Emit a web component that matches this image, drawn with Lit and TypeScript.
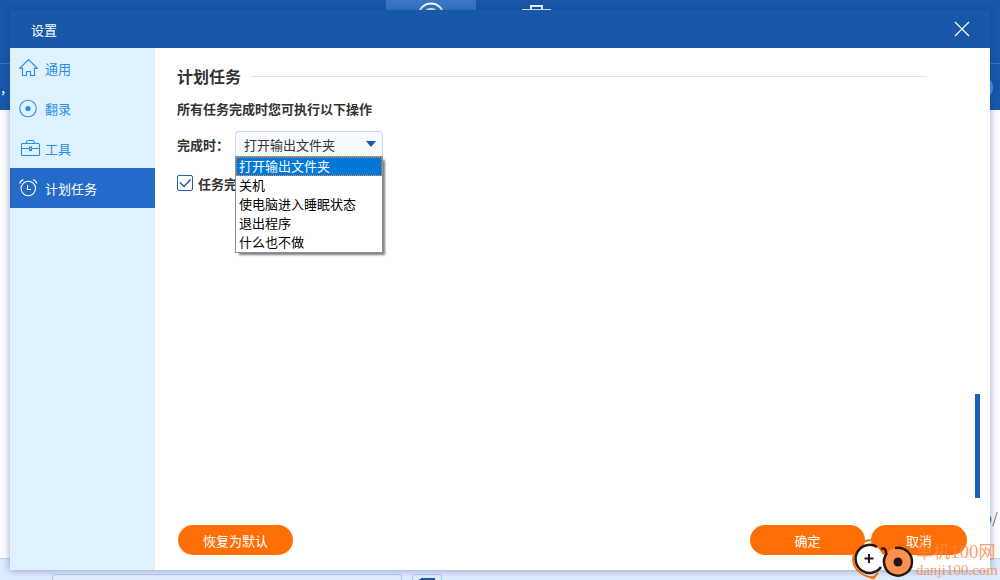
import { LitElement, html, css, svg } from "lit";
import { customElement, property, state } from "lit/decorators.js";
import { classMap } from "lit/directives/class-map.js";

const icons = {
  home: svg`<path d="M.5 10.5 9.5 1.5 18.5 10.5"/><path d="M3.5 9.5V17.5H7.5V13.5H11.5V17.5H15.5V9.5"/><path d="M.5 10.5H3.5M15.5 10.5H18.5"/>`,
  disc: svg`<circle cx="9" cy="10.5" r="8.3"/><circle cx="9" cy="10.5" r="2.6" fill="currentColor" stroke="none"/>`,
  tools: svg`<rect x="2.5" y="5.5" width="18" height="12" rx="1"/><path d="M7.5 5.5V4.5Q7.5 2.5 9 2.500H14Q15.5 2.5 15.5 4.5V5.5M2.5 10.5H10M13 10.5H20.5"/><rect x="10.5" y="9" width="2" height="3.5"/>`,
  clock: svg`<circle cx="9.3" cy="10.5" r="7.2"/><path d="M8.5 7V11.5H12M.7 5.500Q1.5 2.5 4.5 1.8M14 1.8Q17 2.5 17.800 5.5"/>`,
};

type IconName = keyof typeof icons;

const sections: { label: string; icon: IconName }[] = [
  { label: "通用", icon: "home" },
  { label: "翻录", icon: "disc" },
  { label: "工具", icon: "tools" },
  { label: "计划任务", icon: "clock" },
];

const actions = ["打开输出文件夹", "关机", "使电脑进入睡眠状态", "退出程序", "什么也不做"];

@customElement("main-window")
export class MainWindow extends LitElement {
  static styles = css`
    :host {
      display: flex;
      flex-direction: column;
      height: 100%;
      overflow: hidden;
      background: #fff;
    }
    .tabs {
      height: 63px;
      display: flex;
      justify-content: center;
      gap: 15px;
      padding-right: 33px;
      background: #1858a8;
    }
    .tab {
      display: flex;
      align-items: flex-start;
      width: 90px;
      height: 63px;
      padding: 0;
      border: 0;
      background: none;
      color: #fff;
    }
    .tab.active {
      background: #3a77c3;
    }
    .tab svg {
      width: 90px;
      height: 20px;
      fill: none;
      stroke: currentColor;
      stroke-width: 2;
    }
    .bar {
      display: flex;
      justify-content: space-between;
      align-items: center;
      box-sizing: border-box;
      height: 47px;
      border-top: 1px solid #3b73bb;
      background: #1858a8;
      color: #fff;
      font-size: 13px;
    }
    .knob {
      width: 23px;
      height: 23px;
      margin-right: 7px;
      border: 0;
      border-radius: 12px;
      background: #3d9cf0;
    }
    .area {
      flex: 1;
      display: flex;
      flex-direction: column;
      justify-content: flex-end;
      align-items: flex-end;
      padding: 0 2px 30px;
      color: #777;
      font-size: 15px;
      line-height: 20px;
    }
    .bottom {
      box-sizing: border-box;
      height: 22px;
      display: flex;
      gap: 10px;
      padding: 15px 0 0 52px;
      border-top: 1px solid #bdd0f2;
      background: #dfebfe;
      overflow: hidden;
    }
    .path,
    .browse {
      box-sizing: border-box;
      flex: none;
      height: 24px;
      padding: 0;
      border: 1px solid #b4c9ee;
      border-radius: 3px;
      background: #e3edff;
      color: #1858a8;
    }
    .path {
      width: 350px;
    }
    .browse {
      display: flex;
      justify-content: center;
      align-items: flex-start;
      width: 30px;
    }
    .browse svg {
      margin-top: 2px;
      fill: none;
      stroke: currentColor;
      stroke-width: 2;
    }
  `;

  render() {
    return html`
      <nav class="tabs">
        <button class="tab active" aria-label="翻录">
          <svg viewBox="0 0 90 20"><circle cx="45" cy="16" r="12.5" /><circle cx="45" cy="16" r="7" /></svg>
        </button>
        <button class="tab" aria-label="工具">
          <svg viewBox="0 0 90 20"><path d="M40 10V6H51V10M32 10H59V19H32Z" /></svg>
        </button>
      </nav>
      <div class="bar"><span>，</span><button class="knob" aria-label="播放"></button></div>
      <div class="area"><span>o/</span></div>
      <div class="bottom">
        <input class="path" aria-label="输出路径" />
        <button class="browse" aria-label="浏览">
          <svg width="16" height="14"><path d="M1 13V3H3V2H15V13M12 2V6" /></svg>
        </button>
      </div>
    `;
  }
}

@customElement("action-picker")
export class ActionPicker extends LitElement {
  @property({ type: Number }) index = 0;
  @state() private open = true;

  static styles = css`
    :host {
      display: flex;
      align-items: center;
      font-size: 13px;
    }
    label {
      width: 58px;
      font-weight: bold;
    }
    .field {
      position: relative;
      width: 148px;
    }
    select {
      display: block;
      appearance: none;
      box-sizing: border-box;
      width: 100%;
      height: 26px;
      padding: 0 24px 0 8px;
      border: 1px solid #cbdaf2;
      border-radius: 3px;
      background: #f7faff;
      color: #333;
      font: inherit;
      outline: none;
    }
    .arrow {
      position: absolute;
      top: 10px;
      right: 7px;
      fill: #1858a8;
      pointer-events: none;
    }
    .list {
      position: absolute;
      z-index: 1;
      top: 25px;
      left: 0;
      right: 0;
      margin: 0;
      padding: 0;
      list-style: none;
      border: 1px solid #8c8f94;
      background: #fff;
      box-shadow: 3px 3px 2px -1px rgba(0, 0, 0, 0.5);
      color: #000;
    }
    .item {
      box-sizing: border-box;
      height: 19px;
      padding-left: 3px;
      line-height: 18px;
      white-space: nowrap;
    }
    .item.chosen {
      background: #0078d7;
      color: #fff;
      outline: 1px dotted #ff8728;
      outline-offset: -1px;
    }
  `;

  private toggle(e: Event) {
    e.preventDefault();
    this.open = !this.open;
  }

  private choose(i: number) {
    this.index = i;
    this.open = false;
  }

  render() {
    return html`
      <label for="action">完成时：</label>
      <div class="field">
        <select id="action" @mousedown=${this.toggle}>
          ${actions.map((a, i) => html`<option ?selected=${i === this.index}>${a}</option>`)}
        </select>
        <svg class="arrow" width="10" height="6"><path d="M0 0H10L5 6Z" /></svg>
        ${this.open
          ? html`<ul class="list" role="listbox" aria-label="完成时">
              ${actions.map(
                (a, i) => html`<li
                  class=${classMap({ item: true, chosen: i === this.index })}
                  role="option"
                  aria-selected=${i === this.index}
                  @click=${() => this.choose(i)}
                >${a}</li>`
              )}
            </ul>`
          : null}
      </div>
    `;
  }
}

@customElement("settings-dialog")
export class SettingsDialog extends LitElement {
  @state() private section = 3;

  static styles = css`
    :host {
      display: grid;
      grid-template: 38px 1fr / 145px 1fr;
      background: #fff;
      box-shadow: 0 0 8px rgba(20, 50, 130, 0.45);
      font-size: 13px;
      color: #333;
    }
    button {
      font: inherit;
      cursor: pointer;
    }
    .head {
      grid-column: 1 / -1;
      display: flex;
      align-items: center;
      justify-content: space-between;
      padding: 0 20px 0 21px;
      background: #1858a8;
      color: #fff;
    }
    .close {
      padding: 0;
      border: 0;
      background: none;
      color: #fff;
    }
    .close svg {
      display: block;
      fill: none;
      stroke: currentColor;
      stroke-width: 1.2;
    }
    .side {
      background: #dff1fe;
    }
    .link {
      display: flex;
      align-items: center;
      gap: 4px;
      height: 40px;
      padding-left: 9px;
      color: #2a8fe6;
      text-decoration: none;
    }
    .link.active {
      background: #246bc9;
      color: #fff;
    }
    .icon {
      width: 22px;
      height: 20px;
      fill: none;
      stroke: currentColor;
      stroke-width: 1.1;
    }
    .main {
      display: flex;
      flex-direction: column;
    }
    .content {
      flex: 1;
      display: flex;
      justify-content: space-between;
      padding: 17px 10px 0 22px;
    }
    .form {
      flex: 1;
      margin-right: 48px;
    }
    h2 {
      display: flex;
      align-items: center;
      gap: 10px;
      height: 22px;
      margin: 0;
      font-size: 16px;
      line-height: 22px;
    }
    h2::after {
      content: "";
      flex: 1;
      height: 1px;
      background: #cfe8f8;
    }
    h3 {
      margin: 12px 0;
      font-size: 13px;
      line-height: 20px;
    }
    .check {
      display: flex;
      align-items: center;
      gap: 5px;
      width: 206px;
      height: 16px;
      margin-top: 18px;
      font-weight: bold;
    }
    .check input {
      appearance: none;
      box-sizing: border-box;
      width: 16px;
      height: 16px;
      margin: 0;
      border: 1px solid #2463b5;
      border-radius: 2px;
      background: #fff;
    }
    .box {
      display: grid;
    }
    .box > * {
      grid-area: 1 / 1;
    }
    .box svg {
      fill: none;
      stroke: #1858a8;
      stroke-width: 1.5;
      pointer-events: none;
      visibility: hidden;
    }
    .box input:checked + svg {
      visibility: visible;
    }
    .thumb {
      align-self: flex-end;
      width: 5px;
      height: 104px;
      background: #1b62b5;
    }
    .foot {
      display: flex;
      gap: 6px;
      padding: 27px 23px 15px;
    }
    .pill {
      width: 115px;
      height: 30px;
      padding: 0;
      border: 0;
      border-radius: 15px;
      background: #ff6f08;
      color: #fff;
    }
    .pill.reset {
      margin-right: auto;
    }
    .pill.cancel {
      width: 96px;
    }
  `;

  render() {
    return html`
      <header class="head">
        <span>设置</span>
        <button class="close" aria-label="关闭">
          <svg width="16" height="16"><path d="M1 1 15 15M15 1 1 15" /></svg>
        </button>
      </header>
      <nav class="side">
        ${sections.map(
          (s, i) => html`<a
            href="#"
            class=${classMap({ link: true, active: i === this.section })}
            @click=${(e: Event) => {
              e.preventDefault();
              this.section = i;
            }}
          ><svg class="icon" viewBox="0 0 22 20">${icons[s.icon]}</svg>${s.label}</a>`
        )}
      </nav>
      <section class="main">
        <div class="content">
          <div class="form">
            <h2>计划任务</h2>
            <h3>所有任务完成时您可执行以下操作</h3>
            <action-picker></action-picker>
            <label class="check">
              <span class="box">
                <input type="checkbox" checked />
                <svg width="16" height="16"><path d="M3 7.5 7 11.5 13.5 4.5" /></svg>
              </span>
              任务完
            </label>
          </div>
          <div class="thumb"></div>
        </div>
        <footer class="foot">
          <button class="pill reset">恢复为默认</button>
          <button class="pill">确定</button>
          <button class="pill cancel">取消</button>
        </footer>
      </section>
    `;
  }
}

@customElement("app-root")
export class AppRoot extends LitElement {
  static styles = css`
    :host {
      display: block;
      position: relative;
      height: 100vh;
      overflow: hidden;
      font-family: "Noto Sans CJK SC", "Liberation Sans", sans-serif;
    }
    settings-dialog {
      position: absolute;
      inset: 10px;
    }
    .mark {
      position: absolute;
      right: 2px;
      bottom: 0;
      display: flex;
      color: #ff8a45;
      pointer-events: none;
    }
    .mark svg {
      display: block;
    }
    .words {
      display: flex;
      flex-direction: column;
      padding-top: 2px;
      opacity: 0.8;
      white-space: nowrap;
    }
    .name {
      font-size: 17px;
      line-height: 21px;
    }
    .site {
      font-family: "Liberation Serif", serif;
      font-size: 15px;
      line-height: 17px;
    }
    .digits {
      font-family: "Liberation Serif", serif;
      font-size: 19px;
    }
  `;

  render() {
    return html`
      <main-window></main-window>
      <settings-dialog></settings-dialog>
      <div class="mark">
        <svg width="64" height="42" viewBox="852 538 64 42" fill="none">
          <circle cx="869" cy="559" r="14" fill="#fff" />
          <path d="M873 540Q855 540 853 559Q854 574 873 578L878 573" stroke="#ff6f08" stroke-width="2" />
          <path d="M870 577Q877 577 878 573L874 579Z" fill="#ff6f08" stroke="#ff6f08" />
          <path d="M877 547A14 14 0 1 0 881 567" stroke="#231815" stroke-width="2.5" />
          <path d="M864.5 558.5H873.5M869 554V563" stroke="#231815" stroke-width="2" />
          <circle cx="898" cy="562" r="14" fill="#ff9150" />
          <path d="M881 549Q886 547 886 553M895 548A14 14 0 1 1 887 553" stroke="#231815" stroke-width="2.5" />
          <circle cx="898" cy="562" r="4.5" fill="#231815" />
        </svg>
        <div class="words">
          <span class="name">单机<span class="digits">100</span>网</span>
          <span class="site">danji100.com</span>
        </div>
      </div>
    `;
  }
}
